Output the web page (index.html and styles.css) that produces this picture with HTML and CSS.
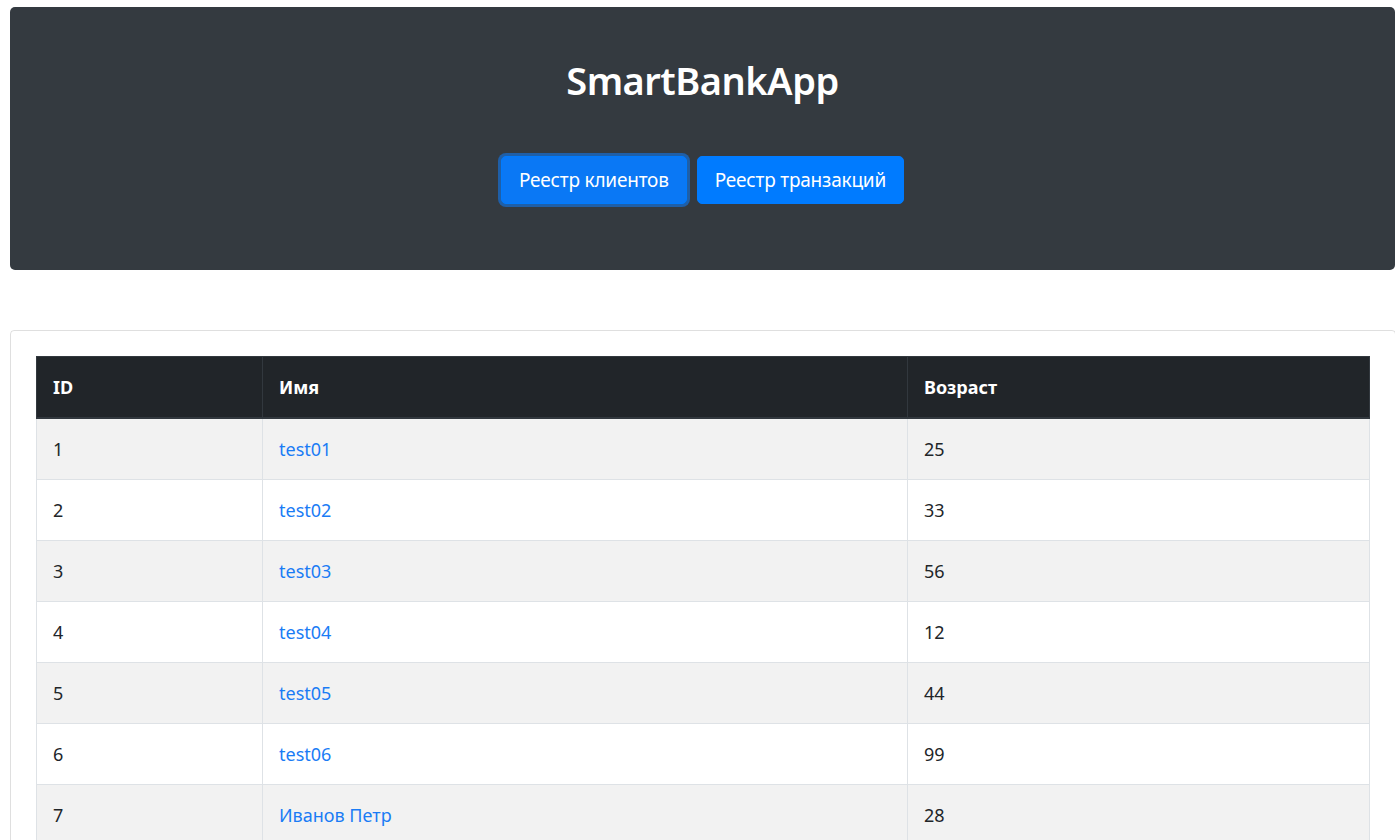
FILE: index.html
```html
<!DOCTYPE html>
<html lang="ru">
<head>
<meta charset="utf-8">
<title>SmartBankApp</title>
<link rel="stylesheet" href="styles.css">
</head>
<body>
<div class="page">
  <header class="jumbo">
    <h1 class="title">SmartBankApp</h1>
    <div class="actions">
      <a class="btn btn-focus" href="#">Реестр клиентов</a>
      <a class="btn" href="#">Реестр транзакций</a>
    </div>
  </header>
  <section class="card">
    <table class="tbl">
      <colgroup>
        <col class="c-id">
        <col class="c-name">
        <col class="c-age">
      </colgroup>
      <thead>
        <tr><th>ID</th><th>Имя</th><th>Возраст</th></tr>
      </thead>
      <tbody>
        <tr><td>1</td><td><a href="#">test01</a></td><td>25</td></tr>
        <tr><td>2</td><td><a href="#">test02</a></td><td>33</td></tr>
        <tr><td>3</td><td><a href="#">test03</a></td><td>56</td></tr>
        <tr><td>4</td><td><a href="#">test04</a></td><td>12</td></tr>
        <tr><td>5</td><td><a href="#">test05</a></td><td>44</td></tr>
        <tr><td>6</td><td><a href="#">test06</a></td><td>99</td></tr>
        <tr><td>7</td><td><a href="#">Иванов Петр</a></td><td>28</td></tr>
      </tbody>
    </table>
  </section>
</div>
</body>
</html>
```

FILE: styles.css
```css
* { box-sizing: border-box; }
html, body { margin: 0; padding: 0; overflow: hidden; }
body {
  font-family: "Noto Sans", "Open Sans", sans-serif;
  color: #212529;
  background: #fff;
}
.page {
  width: 1385px;
  margin: 7px 0 0 10px;
}
.jumbo {
  background: #343a40;
  border-radius: 5px;
  padding: 49px 32px 66px;
  text-align: center;
  height: 263px;
}
.title {
  margin: 0;
  font-size: 38px;
  line-height: 48px;
  font-weight: 600;
  color: #fff;
  letter-spacing: -0.5px;
}
.actions {
  margin-top: 52px;
  display: flex;
  justify-content: center;
  gap: 10px;
}
.btn {
  display: inline-block;
  background: #007bff;
  color: #fff;
  text-decoration: none;
  font-size: 19px;
  line-height: 30px;
  padding: 8px 17px;
  border: 1px solid #007bff;
  border-radius: 5px;
  letter-spacing: -0.2px;
}
.btn-focus {
  background: #0a78f5;
  box-shadow: 0 0 0 3px #1f5fa8;
}
.card {
  margin-top: 60px;
  border: 1px solid rgba(0,0,0,.125);
  border-radius: 4px;
  padding: 25px;
  width: 1386px;
}
.tbl {
  width: 100%;
  border-collapse: collapse;
  table-layout: fixed;
  font-size: 18px;
  line-height: 28px;
}
.c-id { width: 226px; }
.c-name { width: 645px; }
.tbl th, .tbl td {
  text-align: left;
  padding: 16px 16px;
  border: 1px solid #dee2e6;
}
.tbl th {
  background: #212529;
  color: #fff;
  font-weight: 700;
  border-color: #32383e;
  border-bottom-width: 2px;
}
.tbl tbody tr:nth-child(odd) td { background: #f2f2f2; }
.tbl a { color: #1a7cf5; text-decoration: none; }
```
